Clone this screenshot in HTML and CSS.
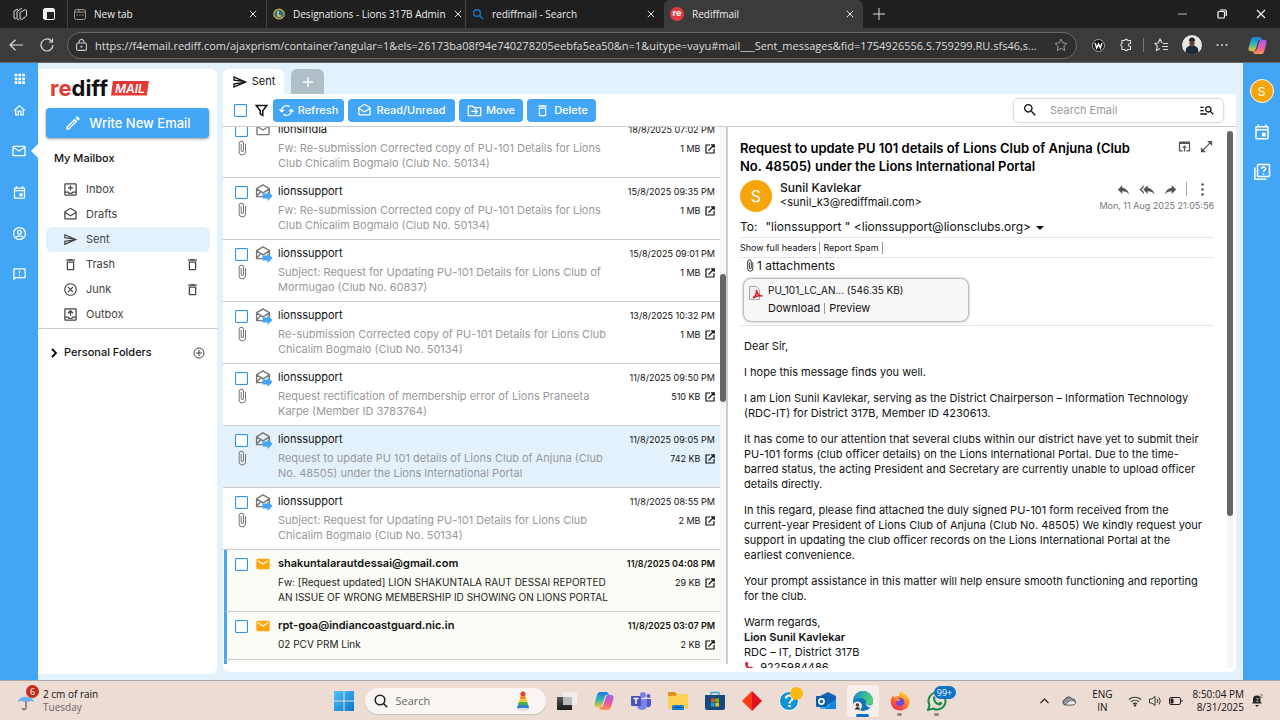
FILE: index.html
```html
<!DOCTYPE html>
<html lang="en">
<head>
    <meta charset="UTF-8">
    <meta name="viewport" content="width=device-width, initial-scale=1.0">
    <title>Rediffmail</title>
    <link rel="stylesheet" href="styles.css">
</head>
<body>

    <!-- Icon set -->
    <svg class="sprite" aria-hidden="true">
        <symbol id="close" viewBox="0 0 10 10"><path d="M1 1l8 8M9 1l-8 8" stroke="currentColor" stroke-width="1.2" fill="none"/></symbol>
        <symbol id="home" viewBox="0 0 24 24"><path d="M12 5.69l5 4.5V18h-2v-6H9v6H7v-7.81l5-4.5M12 3L2 12h3v8h6v-6h2v6h6v-8h3L12 3z"/></symbol>
        <symbol id="apps" viewBox="0 0 24 24"><path d="M3 3h5v5H3zM10 3h5v5h-5zM17 3h5v5h-5zM3 10h5v5H3zM10 10h5v5h-5zM17 10h5v5h-5zM3 17h5v5H3zM10 17h5v5h-5zM17 17h5v5h-5z"/></symbol>
        <symbol id="mail" viewBox="0 0 24 24"><path d="M22 6c0-1.1-.9-2-2-2H4c-1.1 0-2 .9-2 2v12c0 1.1.9 2 2 2h16c1.1 0 2-.9 2-2V6zm-2 0l-8 5-8-5h16zm0 12H4V8l8 5 8-5v10z"/></symbol>
        <symbol id="unread" viewBox="0 0 24 24"><path d="M20 4H4c-1.100 0-2 .9-2 2v12c0 1.100.9 2 2 2h16c1.100 0 2-.9 2-2V6c0-1.100-.9-2-2-2zm0 4l-8 5-8-5V6l8 5 8-5v2z"/></symbol>
        <symbol id="event" viewBox="0 0 24 24"><path d="M19 4h-1V2h-2v2H8V2H6v2H5c-1.110 0-1.990.9-1.990 2L3 20c0 1.100.890 2 2 2h14c1.100 0 2-.9 2-2V6c0-1.100-.9-2-2-2zm0 16H5V10h14v10zm0-12H5V6h14v2zm-7 5h5v5h-5z"/></symbol>
        <symbol id="person" viewBox="0 0 24 24"><g fill="none" stroke="currentColor" stroke-width="2"><circle cx="12" cy="12" r="9.500"/><circle cx="12" cy="10" r="3"/><path d="M5.500 18.500c3-3.500 10-3.500 13 0"/></g></symbol>
        <symbol id="feedback" viewBox="0 0 24 24"><path d="M20 2H4c-1.100 0-1.990.9-1.990 2L2 22l4-4h14c1.100 0 2-.9 2-2V4c0-1.100-.9-2-2-2zm0 14H5.170L4 17.170V4h16v12zm-9-4h2v2h-2zm0-6h2v4h-2z"/></symbol>
        <symbol id="help" viewBox="0 0 24 24"><g fill="none" stroke="currentColor" stroke-width="2"><rect x="6" y="2" width="16" height="16" rx="1"/><path d="M2.500 6v14.500a1 1 0 0 0 1 1H18M11.500 8c0-3.500 5.200-3.300 5.200-.3 0 2-2.600 2-2.600 4M14.100 13.500v2"/></g></symbol>
        <symbol id="send" viewBox="0 0 24 24"><path d="M4.010 6.030l7.510 3.220-7.520-1 .010-2.220m7.500 8.720L4 17.970v-2.220l7.510-1M2.010 3L2 10l15 2-15 2 .010 7L23 12 2.010 3z"/></symbol>
        <symbol id="drafts" viewBox="0 0 24 24"><path d="M21.990 8c0-.720-.370-1.350-.940-1.700L12 1 2.950 6.300C2.380 6.650 2 7.280 2 8v10c0 1.100.9 2 2 2h16c1.100 0 2-.9 2-2l-.010-10zM20 8v.010L12 13 4 8l8-4.680L20 8zM4 18v-7.660l8 5.020 8-5.010V18H4z"/></symbol>
        <symbol id="forwarded" viewBox="0 0 18 17"><path d="M8 .9l6.400 3.700v8H1.600v-8zM1.600 4.800L8 8.800l6.400-4M1.600 12l4.200-4.200" fill="none" stroke="#777" stroke-width="1.400"/><path d="M7.500 9.500h5V7l5 5-5 5v-2.500h-5z" fill="#42a5f5"/></symbol>
        <symbol id="trash" viewBox="0 0 24 24"><path d="M6 19c0 1.100.9 2 2 2h8c1.100 0 2-.9 2-2V7H6v12zM8 9h8v10H8V9zm7.500-5l-1-1h-5l-1 1H5v2h14V4h-3.500z"/></symbol>
        <symbol id="inbox" viewBox="0 0 24 24"><g fill="none" stroke="currentColor" stroke-width="2"><rect x="3" y="3" width="18" height="18" rx="1"/><path d="M3 16h5c1 3 7 3 8 0h5M12 5v8M8 9.500h8"/></g></symbol>
        <symbol id="outbox" viewBox="0 0 24 24"><g fill="none" stroke="currentColor" stroke-width="2"><rect x="3" y="3" width="18" height="18" rx="1"/><path d="M3 16h5c1 3 7 3 8 0h5M12 14V6M8 10l4-4 4 4"/></g></symbol>
        <symbol id="junk" viewBox="0 0 24 24"><g fill="none" stroke="currentColor" stroke-width="2"><circle cx="12" cy="12" r="10"/><path d="M7.500 7.500l9 9M16.500 7.500l-9 9"/></g></symbol>
        <symbol id="add" viewBox="0 0 24 24"><g fill="none" stroke="currentColor" stroke-width="2"><circle cx="12" cy="12" r="10"/><path d="M12 6v12M6 12h12"/></g></symbol>
        <symbol id="edit" viewBox="0 0 24 24"><path d="M14.060 9.020l.920.920L5.920 19H5v-.920l9.060-9.060M17.660 3c-.250 0-.510.1-.7.290l-1.830 1.830 3.750 3.750 1.830-1.830c.390-.390.390-1.020 0-1.410l-2.340-2.340c-.2-.2-.450-.290-.710-.290zm-3.600 3.190L3 17.250V21h3.750L17.810 9.940l-3.750-3.750z"/></symbol>
        <symbol id="filter" viewBox="0 0 24 24"><path d="M3.500 4h17L14 12.500V20l-4-2.500v-5z" fill="none" stroke="currentColor" stroke-width="2.400"/></symbol>
        <symbol id="sync" viewBox="0 0 24 24"><g fill="none" stroke="currentColor" stroke-width="2"><path d="M4 13a8 8 0 0 1 13-7M20 11a8 8 0 0 1-13 7M1 10l3 4 4-3M23 14l-3-4-4 3"/></g></symbol>
        <symbol id="move" viewBox="0 0 24 24"><path d="M2 5h7l2 2.500h11V20H2zM7 13.500h9M12.500 9.500l4 4-4 4" fill="none" stroke="currentColor" stroke-width="2"/></symbol>
        <symbol id="search" viewBox="0 0 24 24"><path d="M15.500 14h-.790l-.280-.270C15.410 12.590 16 11.110 16 9.500 16 5.910 13.090 3 9.500 3S3 5.910 3 9.500 5.910 16 9.500 16c1.610 0 3.090-.590 4.230-1.570l.270.280v.790l5 4.990L20.490 19l-4.990-5zm-6 0C7.010 14 5 11.990 5 9.500S7.010 5 9.500 5 14 7.010 14 9.500 11.990 14 9.500 14z"/></symbol>
        <symbol id="manage" viewBox="0 0 24 24"><path d="M7 9H2V7h5v2zm0 3H2v2h5v-2zm13.590 7l-3.830-3.830c-.8.520-1.740.830-2.760.830-2.760 0-5-2.240-5-5s2.240-5 5-5 5 2.240 5 5c0 1.020-.310 1.960-.830 2.750L22 17.590 20.590 19zM17 11c0-1.650-1.350-3-3-3s-3 1.350-3 3 1.350 3 3 3 3-1.350 3-3zM2 19h10v-2H2v2z"/></symbol>
        <symbol id="reply" viewBox="0 0 24 24"><path d="M10 9V5l-7 7 7 7v-4.100c5 0 8.500 1.600 11 5.100-1-5-4-10-11-11z"/></symbol>
        <symbol id="replyall" viewBox="0 0 24 24"><path d="M7 8V5l-7 7 7 7v-3l-4-4 4-4zm6 1V5l-7 7 7 7v-4.100c5 0 8.500 1.600 11 5.100-1-5-4-10-11-11z"/></symbol>
        <symbol id="forward" viewBox="0 0 24 24"><path d="M14 9V5l7 7-7 7v-4.100c-5 0-8.500 1.600-11 5.100 1-5 4-10 11-11z"/></symbol>
        <symbol id="more" viewBox="0 0 24 24"><circle cx="12" cy="4" r="2"/><circle cx="12" cy="12" r="2"/><circle cx="12" cy="20" r="2"/></symbol>
        <symbol id="browser" viewBox="0 0 24 24"><path d="M19 4H5c-1.110 0-2 .9-2 2v12c0 1.100.890 2 2 2h4v-2H5V8h14v10h-4v2h4c1.100 0 2-.9 2-2V6c0-1.100-.890-2-2-2zm-7 6l-4 4h3v6h2v-6h3l-4-4z"/></symbol>
        <symbol id="expand" viewBox="0 0 24 24"><path d="M21 11V3h-8l3.290 3.290-10 10L3 13v8h8l-3.290-3.290 10-10z"/></symbol>
        <symbol id="clip" viewBox="5 0 14 24"><path d="M16.500 6v11.500c0 2.210-1.790 4-4 4s-4-1.790-4-4V5c0-1.380 1.120-2.500 2.500-2.500s2.500 1.120 2.500 2.500v10.500c0 .550-.450 1-1 1s-1-.450-1-1V6H10v9.500c0 1.380 1.120 2.500 2.500 2.500s2.500-1.120 2.500-2.500V5c0-2.210-1.790-4-4-4S7 2.790 7 5v12.500c0 3.040 2.460 5.500 5.500 5.500s5.500-2.460 5.500-5.500V6h-1.500z"/></symbol>
        <symbol id="open" viewBox="0 0 10 10"><path d="M5 1H1v8h8V5M3.500 6.500L9 1M6 .8h3.200V4" fill="none" stroke="currentColor" stroke-width="1.200"/></symbol>
        <symbol id="copilot" viewBox="0 0 20 20">
            <linearGradient id="cpA" x1="0" y1="0" x2="0" y2="1"><stop offset="0" stop-color="#1b7be0"/><stop offset=".5" stop-color="#2fb8b0"/><stop offset="1" stop-color="#f2c230"/></linearGradient>
            <linearGradient id="cpB" x1="0" y1="0" x2="0" y2="1"><stop offset="0" stop-color="#a45bee"/><stop offset=".6" stop-color="#ee5d9b"/><stop offset="1" stop-color="#fb9a4b"/></linearGradient>
            <path d="M6 1h6c2 0 2.500 1.500 3 3h-2c-1.500 0-2 .8-2.500 2.500L8.500 13c-.5 2-1.500 3-3 3H3c-2 0-3-1.500-2.300-4L3 4c.6-2 1.500-3 3-3z" fill="url(#cpA)"/>
            <path d="M14 19H8c-2 0-2.500-1.500-3-3h2c1.500 0 2-.8 2.500-2.500L11.500 7c.5-2 1.500-3 3-3H17c2 0 3 1.500 2.300 4L17 16c-.6 2-1.500 3-3 3z" fill="url(#cpB)"/>
        </symbol>
    </svg>

    <!-- Browser tabs -->
    <header class="titlebar">
        <div class="tab-tools">
            <svg width="14" height="14" viewBox="0 0 14 14" fill="none" stroke="#ddd"><path d="M1 4l4-2M1 4v7l2 1M4 4.500L9 1M4 4.500V12l2 1M7 5.500L12.500 2.500q1 0 1 1V9L8.500 12.500q-1.500 0-1.500-1.500z"/></svg>
            <svg width="12" height="12" viewBox="0 0 12 12"><rect x=".6" y=".6" width="10.800" height="10.800" rx="2" fill="none" stroke="#fff" stroke-width="1.200"/><path d="M1 1h10v3H4v7H1z" fill="#fff" fill-opacity=".9"/><path d="M4 4v7h7V4z" fill="#1f1f1f"/></svg>
        </div>
        <div class="tab">
            <svg width="12" height="12" viewBox="0 0 12 12" fill="none" stroke="#999"><rect x=".5" y="1.500" width="11" height="10" rx="2"/><path d="M1 4h10M5 2v2M2.500 7h1.500M5.200 7h1.500M8 7h1.500"/></svg>
            <span>New tab</span>
            <button aria-label="Close tab"><svg width="8" height="8"><use href="#close"/></svg></button>
        </div>
        <div class="tab">
            <svg width="12" height="12" viewBox="0 0 12 12"><circle cx="6" cy="6" r="5.600" fill="#d3ac2b"/><circle cx="6" cy="6" r="4.300" fill="#2a6a9b"/><path d="M0 4l2 1v3L0 9zM12 4l-2 1v3l2 1z" fill="#7c8f35"/><path d="M5 3v5h3" stroke="#f3d24b" stroke-width="1.500" fill="none"/></svg>
            <span>Designations - Lions 317B Admin</span>
            <button aria-label="Close tab"><svg width="8" height="8"><use href="#close"/></svg></button>
        </div>
        <div class="tab">
            <svg width="12" height="12" viewBox="0 0 12 12" fill="none" stroke="#1a78c9" stroke-width="1.400"><circle cx="5" cy="5" r="3.300"/><path d="M7.500 7.500L11 11"/></svg>
            <span>rediffmail - Search</span>
            <button aria-label="Close tab"><svg width="8" height="8"><use href="#close"/></svg></button>
        </div>
        <div class="tab current">
            <span class="favicon">re</span>
            <span>Rediffmail</span>
            <button aria-label="Close tab"><svg width="8" height="8"><use href="#close"/></svg></button>
        </div>
        <button class="new-tab" aria-label="New tab"><svg width="12" height="12" viewBox="0 0 12 12"><path d="M6 0v12M0 6h12" stroke="#ddd"/></svg></button>
        <div class="window-buttons">
            <button aria-label="Minimise"><svg width="10" height="10" viewBox="0 0 10 10"><path d="M0 5h9" stroke="#bbb"/></svg></button>
            <button aria-label="Restore"><svg width="10" height="10" viewBox="0 0 10 10" fill="none" stroke="#fff" stroke-width="1.200"><rect x="1" y="2.500" width="6.500" height="6.500" rx="1"/><path d="M3 1h5q1.300 0 1.300 1.300V7"/></svg></button>
            <button aria-label="Close"><svg width="10" height="10"><use href="#close"/></svg></button>
        </div>
    </header>

    <!-- Address bar -->
    <div class="addressbar">
        <button aria-label="Back"><svg width="14" height="12" viewBox="0 0 14 12" fill="none" stroke="#ddd" stroke-width="1.200"><path d="M14 6H1M6.500.8L1 6l5.500 5.200"/></svg></button>
        <button aria-label="Reload"><svg width="14" height="14" viewBox="0 0 14 14" fill="none" stroke="#ddd" stroke-width="1.200"><path d="M13 7A6 6 0 1 1 11.500 3M12.500.5V4H9"/></svg></button>
        <div class="address">
            <svg width="11" height="12" viewBox="0 0 11 12" fill="none" stroke="#ccc" stroke-width="1.100"><rect x=".6" y="4" width="9.800" height="7.400" rx="1.500"/><path d="M3 4V3a2.500 2.500 0 0 1 5 0v1"/><circle cx="5.500" cy="7.700" r=".5"/></svg>
            <input type="text" aria-label="Address" value="https://f4email.rediff.com/ajaxprism/container?angular=1&amp;els=26173ba08f94e740278205eebfa5ea50&amp;n=1&amp;uitype=vayu#mail___Sent_messages&amp;fid=1754926556.S.759299.RU.sfs46,s...">
            <button aria-label="Favourite"><svg width="14" height="14" viewBox="0 0 14 14" fill="none" stroke="#999"><path d="M7 1l1.800 3.900 4.200.5-3.100 2.900.8 4.200L7 10.400l-3.700 2.100.8-4.200L1 5.400l4.200-.5z"/></svg></button>
        </div>
        <div class="browser-icons">
            <button aria-label="Extension"><svg width="13" height="13" viewBox="0 0 13 13"><circle cx="6.500" cy="6.500" r="6" fill="#111" stroke="#aaa"/><path d="M3 4l1.700 5 1.800-4 1.800 4L10 4" stroke="#fff" stroke-width="1.500" fill="none"/></svg></button>
            <button aria-label="Extensions"><svg width="14" height="14" viewBox="0 0 14 14" fill="none" stroke="#ddd" stroke-width="1.100"><path d="M3 2.500h2.500a1.700 1.700 0 0 1 3.200 0H11.500V5.500H11a1.500 1.500 0 0 0 0 3h.5v3H8.700a1.700 1.700 0 0 1-3.200 0H3V8.700a1.700 1.700 0 0 1 0-3.200z"/></svg></button>
            <span class="bar"></span>
            <button aria-label="Favourites"><svg width="14" height="14" viewBox="0 0 14 14" fill="none" stroke="#ddd" stroke-width="1.100"><path d="M8 5L6 1 4.200 5 .8 5.400 3.300 8l-.8 4.500L6 10.500M9 5.500h5M8 8.500h6M9 11.500h5"/></svg></button>
            <button aria-label="Profile"><svg width="20" height="20" viewBox="0 0 20 20"><circle cx="10" cy="10" r="10" fill="#e6e6e2"/><path d="M3.500 17.500c0-5 2-7 6.500-7s6.500 2 6.500 7A10 10 0 0 1 3.500 17.500z" fill="#1d2a37"/><path d="M7.500 6q2.500-5 5 0v4L10 12l-2.500-2z" fill="#5d4137"/><path d="M7 6q0-3.500 3-3.500T13 6z" fill="#222"/></svg></button>
            <button aria-label="Settings"><svg width="12" height="4" viewBox="0 0 12 4" fill="#ddd"><circle cx="1.500" cy="2" r="1"/><circle cx="6" cy="2" r="1"/><circle cx="10.500" cy="2" r="1"/></svg></button>
            <button aria-label="Copilot"><svg width="19" height="19"><use href="#copilot"/></svg></button>
        </div>
    </div>

    <div class="app">
        <!-- Left rail -->
        <nav class="rail">
            <a href="#" aria-label="Apps"><svg width="13" height="13"><use href="#apps"/></svg></a>
            <a href="#" aria-label="Home"><svg width="15" height="15"><use href="#home"/></svg></a>
            <a href="#" aria-label="Mail" class="active"><svg width="16" height="16"><use href="#mail"/></svg></a>
            <a href="#" aria-label="Calendar"><svg width="15" height="15"><use href="#event"/></svg></a>
            <a href="#" aria-label="Contacts"><svg width="15" height="15"><use href="#person"/></svg></a>
            <a href="#" aria-label="Feedback"><svg width="15" height="15"><use href="#feedback"/></svg></a>
        </nav>

        <!-- Folders -->
        <aside class="sidebar">
            <div class="logo"><span class="re">re</span><span>diff</span><span class="logo-mail">MAIL</span></div>
            <button class="compose"><svg width="18" height="18"><use href="#edit"/></svg>Write New Email</button>
            <h2>My Mailbox</h2>
            <ul class="folders">
                <li><a href="#"><svg width="15" height="15"><use href="#inbox"/></svg>Inbox</a></li>
                <li><a href="#"><svg width="15" height="15"><use href="#drafts"/></svg>Drafts</a></li>
                <li class="selected"><a href="#"><svg width="15" height="15"><use href="#send"/></svg>Sent</a></li>
                <li><a href="#"><svg width="15" height="15"><use href="#trash"/></svg>Trash</a><button aria-label="Empty trash"><svg width="15" height="15"><use href="#trash"/></svg></button></li>
                <li><a href="#"><svg width="15" height="15" viewBox="-1 -1 26 26"><use href="#junk" width="24" height="24"/></svg>Junk</a><button aria-label="Empty junk"><svg width="15" height="15"><use href="#trash"/></svg></button></li>
                <li><a href="#"><svg width="15" height="15"><use href="#outbox"/></svg>Outbox</a></li>
            </ul>
            <div class="personal">
                <svg width="6" height="10" viewBox="0 0 6 10"><path d="M1 1l4 4-4 4" fill="none" stroke="#000" stroke-width="1.800"/></svg>
                <h2>Personal Folders</h2>
                <button aria-label="Add folder"><svg width="12" height="12"><use href="#add"/></svg></button>
            </div>
        </aside>

        <main class="main">
            <div class="tabs">
                <button class="open-tab"><svg width="16" height="16"><use href="#send"/></svg>Sent</button>
                <button class="add-tab" aria-label="Add tab"><svg width="10" height="10" viewBox="0 0 10 10"><path d="M5 0v10M0 5h10" stroke="#fff" stroke-width="1.400"/></svg></button>
            </div>

            <div class="panel">
                <div class="toolbar">
                    <input type="checkbox" aria-label="Select all">
                    <button class="filter" aria-label="Filter"><svg width="15" height="15"><use href="#filter"/></svg></button>
                    <button class="action refresh"><svg width="15" height="15"><use href="#sync"/></svg>Refresh</button>
                    <button class="action read"><svg width="15" height="15"><use href="#drafts"/></svg>Read/Unread</button>
                    <button class="action move"><svg width="15" height="15"><use href="#move"/></svg>Move</button>
                    <button class="action delete"><svg width="15" height="15"><use href="#trash"/></svg>Delete</button>
                    <div class="search">
                        <svg width="16" height="16"><use href="#search"/></svg>
                        <input type="text" aria-label="Search Email" placeholder="Search Email">
                        <button aria-label="Advanced search"><svg width="16" height="16"><use href="#manage"/></svg></button>
                    </div>
                </div>

                <div class="panes">
                    <!-- Message list -->
                    <div class="list">
                        <ul class="messages">
                            <li>
                                <div class="marks"><input type="checkbox" aria-label="Select message"><svg width="10" height="16"><use href="#clip"/></svg></div>
                                <svg class="state" width="16" height="16"><use href="#mail"/></svg>
                                <div class="text"><h3>lionsindia</h3><p>Fw: Re-submission Corrected copy of PU-101 Details for Lions<br>Club Chicalim Bogmalo (Club No. 50134)</p></div>
                                <div class="meta"><time>18/8/2025 07:02 PM</time><span>1 MB <svg width="10" height="10"><use href="#open"/></svg></span></div>
                            </li>
                            <li>
                                <div class="marks"><input type="checkbox" aria-label="Select message"><svg width="10" height="16"><use href="#clip"/></svg></div>
                                <svg class="state" width="18" height="17"><use href="#forwarded"/></svg>
                                <div class="text"><h3>lionssupport</h3><p>Fw: Re-submission Corrected copy of PU-101 Details for Lions<br>Club Chicalim Bogmalo (Club No. 50134)</p></div>
                                <div class="meta"><time>15/8/2025 09:35 PM</time><span>1 MB <svg width="10" height="10"><use href="#open"/></svg></span></div>
                            </li>
                            <li>
                                <div class="marks"><input type="checkbox" aria-label="Select message"><svg width="10" height="16"><use href="#clip"/></svg></div>
                                <svg class="state" width="18" height="17"><use href="#forwarded"/></svg>
                                <div class="text"><h3>lionssupport</h3><p>Subject: Request for Updating PU-101 Details for Lions Club of<br>Mormugao (Club No. 60837)</p></div>
                                <div class="meta"><time>15/8/2025 09:01 PM</time><span>1 MB <svg width="10" height="10"><use href="#open"/></svg></span></div>
                            </li>
                            <li>
                                <div class="marks"><input type="checkbox" aria-label="Select message"><svg width="10" height="16"><use href="#clip"/></svg></div>
                                <svg class="state" width="18" height="17"><use href="#forwarded"/></svg>
                                <div class="text"><h3>lionssupport</h3><p>Re-submission Corrected copy of PU-101 Details for Lions Club<br>Chicalim Bogmalo (Club No. 50134)</p></div>
                                <div class="meta"><time>13/8/2025 10:32 PM</time><span>1 MB <svg width="10" height="10"><use href="#open"/></svg></span></div>
                            </li>
                            <li>
                                <div class="marks"><input type="checkbox" aria-label="Select message"><svg width="10" height="16"><use href="#clip"/></svg></div>
                                <svg class="state" width="18" height="17"><use href="#forwarded"/></svg>
                                <div class="text"><h3>lionssupport</h3><p>Request rectification of membership error of Lions Praneeta<br>Karpe (Member ID 3783764)</p></div>
                                <div class="meta"><time>11/8/2025 09:50 PM</time><span>510 KB <svg width="10" height="10"><use href="#open"/></svg></span></div>
                            </li>
                            <li class="selected">
                                <div class="marks"><input type="checkbox" aria-label="Select message"><svg width="10" height="16"><use href="#clip"/></svg></div>
                                <svg class="state" width="18" height="17"><use href="#forwarded"/></svg>
                                <div class="text"><h3>lionssupport</h3><p>Request to update PU 101 details of Lions Club of Anjuna (Club<br>No. 48505) under the Lions International Portal</p></div>
                                <div class="meta"><time>11/8/2025 09:05 PM</time><span>742 KB <svg width="10" height="10"><use href="#open"/></svg></span></div>
                            </li>
                            <li>
                                <div class="marks"><input type="checkbox" aria-label="Select message"><svg width="10" height="16"><use href="#clip"/></svg></div>
                                <svg class="state" width="18" height="17"><use href="#forwarded"/></svg>
                                <div class="text"><h3>lionssupport</h3><p>Subject: Request for Updating PU-101 Details for Lions Club<br>Chicalim Bogmalo (Club No. 50134)</p></div>
                                <div class="meta"><time>11/8/2025 08:55 PM</time><span>2 MB <svg width="10" height="10"><use href="#open"/></svg></span></div>
                            </li>
                            <li class="new">
                                <div class="marks"><input type="checkbox" aria-label="Select message"></div>
                                <svg class="state" width="16" height="16"><use href="#unread"/></svg>
                                <div class="text"><h3>shakuntalarautdessai@gmail.com</h3><p>Fw: [Request updated] LION SHAKUNTALA RAUT DESSAI REPORTED<br>AN ISSUE OF WRONG MEMBERSHIP ID SHOWING ON LIONS PORTAL</p></div>
                                <div class="meta"><time>11/8/2025 04:08 PM</time><span>29 KB <svg width="10" height="10"><use href="#open"/></svg></span></div>
                            </li>
                            <li class="new">
                                <div class="marks"><input type="checkbox" aria-label="Select message"></div>
                                <svg class="state" width="16" height="16"><use href="#unread"/></svg>
                                <div class="text"><h3>rpt-goa@indiancoastguard.nic.in</h3><p>02 PCV PRM Link</p></div>
                                <div class="meta"><time>11/8/2025 03:07 PM</time><span>2 KB <svg width="10" height="10"><use href="#open"/></svg></span></div>
                            </li>
                            <li class="new"></li>
                        </ul>
                        <div class="scrollbar"><span class="list-thumb"></span></div>
                    </div>

                    <!-- Open message -->
                    <article class="reader">
                        <div class="mail">
                            <div class="subject">
                                <h1>Request to update PU 101 details of Lions Club of Anjuna (Club<br>No. 48505) under the Lions International Portal</h1>
                                <button aria-label="Open in window"><svg width="15" height="15"><use href="#browser"/></svg></button>
                                <button aria-label="Expand"><svg width="15" height="15"><use href="#expand"/></svg></button>
                            </div>
                            <div class="from">
                                <span class="avatar">S</span>
                                <p class="who"><b>Sunil Kavlekar</b><span>&lt;sunil_k3@rediffmail.com&gt;</span></p>
                                <div class="when">
                                    <div class="replies">
                                        <button aria-label="Reply"><svg width="15" height="15"><use href="#reply"/></svg></button>
                                        <button aria-label="Reply all"><svg width="16" height="15"><use href="#replyall"/></svg></button>
                                        <button aria-label="Forward"><svg width="15" height="15"><use href="#forward"/></svg></button>
                                        <span class="bar"></span>
                                        <button aria-label="More"><svg width="15" height="15"><use href="#more"/></svg></button>
                                    </div>
                                    <time>Mon, 11 Aug 2025 21:05:56</time>
                                </div>
                            </div>
                            <p class="to"><span>To:</span>"lionssupport " &lt;lionssupport@lionsclubs.org&gt; <svg width="8" height="4" viewBox="0 0 8 4"><path d="M0 0h8L4 4z"/></svg></p>
                            <div class="headers"><a href="#">Show full headers</a><a href="#">Report Spam</a></div>
                            <div class="attachments">
                                <p><svg width="8" height="13"><use href="#clip"/></svg>1 attachments</p>
                                <div class="file">
                                    <svg width="14" height="14" viewBox="0 0 14 14"><path d="M.5.500h7l3 3v10H.5z" fill="#eee" stroke="#aaa"/><path d="M4 12c2-1 4-5 3.500-8 .5 4 3 6 6 6-4-1-6.500 0-9.500 2z" fill="none" stroke="#d7222b" stroke-width="1.600"/></svg>
                                    <div>
                                        <p>PU_101_LC_AN... (546.35 KB)</p>
                                        <p class="links"><a href="#">Download</a><i></i><a href="#">Preview</a></p>
                                    </div>
                                </div>
                            </div>
                            <div class="letter">
                                <p>Dear Sir,</p>
                                <p>I hope this message finds you well.</p>
                                <p>I am Lion Sunil Kavlekar, serving as the District Chairperson – Information Technology<br>(RDC-IT) for District 317B, Member ID 4230613.</p>
                                <p>It has come to our attention that several clubs within our district have yet to submit their<br>PU-101 forms (club officer details) on the Lions International Portal. Due to the time-<br>barred status, the acting President and Secretary are currently unable to upload officer<br>details directly.</p>
                                <p>In this regard, please find attached the duly signed PU-101 form received from the<br>current-year President of Lions Club of Anjuna (Club No. 48505) We kindly request your<br>support in updating the club officer records on the Lions International Portal at the<br>earliest convenience.</p>
                                <p>Your prompt assistance in this matter will help ensure smooth functioning and reporting<br>for the club.</p>
                                <p>Warm regards,<br><b>Lion Sunil Kavlekar</b><br>RDC – IT, District 317B<br><svg width="10" height="10" viewBox="0 0 10 10"><path d="M1 2l2-1.500L4.500 3 3.500 4.500l2 2L7 5.500 9.500 7 8 9.500C4 9.500 1 6 1 2z" fill="#d8243c"/></svg> &nbsp;9225984486</p>
                            </div>
                        </div>
                        <div class="scrollbar"><span class="mail-thumb"></span></div>
                    </article>
                </div>
            </div>
        </main>

        <!-- Right rail -->
        <nav class="rail right">
            <a href="#" class="user">S</a>
            <a href="#" aria-label="Calendar"><svg width="18" height="18"><use href="#event"/></svg></a>
            <a href="#" aria-label="Help"><svg width="18" height="18"><use href="#help"/></svg></a>
        </nav>
    </div>

    <!-- Taskbar -->
    <footer class="taskbar">
        <div class="weather">
            <span class="umbrella">
                <svg width="18" height="20" viewBox="0 0 18 20"><path d="M1 11C2 4 16 4 17 11l-3-1-2.500 1L9 10l-2.500 1L4 10z" fill="#6fb1f3"/><path d="M9 10v7c0 2-3.500 2-3.500 0" fill="none" stroke="#666" stroke-width="1.300"/></svg>
                <span class="count">6</span>
            </span>
            <p>2 cm of rain<small>Tuesday</small></p>
        </div>
        <div class="dock">
            <button aria-label="Start"><svg width="20" height="20" viewBox="0 0 20 20"><linearGradient id="win" x1="0" y1="0" x2="1" y2="1"><stop offset="0" stop-color="#4cc6f7"/><stop offset="1" stop-color="#0a73cf"/></linearGradient><path d="M0 0h9.500v9.500H0zM10.500 0H20v9.500h-9.500zM0 10.500h9.500V20H0zM10.500 10.500H20V20h-9.500z" fill="url(#win)"/></svg></button>
            <label class="desk-search">
                <svg width="14" height="14" viewBox="0 0 14 14" fill="none" stroke="#222" stroke-width="1.600"><circle cx="6" cy="6" r="4.800"/><path d="M9.500 9.500l3.700 3.700"/></svg>
                <input type="text" placeholder="Search" aria-label="Search">
                <svg width="14" height="20" viewBox="0 0 14 20"><circle cx="7" cy="3" r="2.600" fill="#e0482f"/><rect x="4" y="5" width="6" height="4" rx="2" fill="#f58a1f"/><rect x="3" y="8" width="8" height="4" rx="2" fill="#f4cc2e"/><rect x="2" y="11" width="10" height="4" rx="2" fill="#49ad50"/><rect x="1" y="14" width="12" height="4" rx="2" fill="#2a80d2"/><ellipse cx="7" cy="18.300" rx="6.500" ry="1.500" fill="#ddd"/></svg>
            </label>
            <button aria-label="Task view"><svg width="20" height="20" viewBox="0 0 20 20"><linearGradient id="tv" x2="0" y2="1"><stop offset="0" stop-color="#555"/><stop offset="1" stop-color="#1b1b1b"/></linearGradient><path d="M0 6h15v13H0z" fill="url(#tv)"/><path d="M6 1h14v13H6z" fill="#eee" fill-opacity=".9"/><path d="M6 6h9v8H6z" fill="#bbb"/></svg></button>
            <button aria-label="Copilot"><svg width="20" height="20"><use href="#copilot"/></svg></button>
            <button aria-label="Teams"><svg width="20" height="20" viewBox="0 0 20 20"><circle cx="12" cy="4" r="3" fill="#7b83eb"/><circle cx="17.500" cy="5" r="2" fill="#5059c9"/><path d="M14 8h6v6q-1 3-4 2z" fill="#5059c9"/><path d="M6 8h10v7q-1 4-5 4t-5-4z" fill="#7b83eb"/><rect y="5" width="10" height="10" rx="1" fill="#4b53bc"/><path d="M2.500 7.500h5M5 7.500V13" stroke="#fff" stroke-width="1.400"/></svg></button>
            <button aria-label="Files"><svg width="20" height="20" viewBox="0 0 20 20"><path d="M0 2q0-1 1-1h6l2 2.500V8H0z" fill="#d9941c"/><path d="M0 5l8-.2L9.500 3H19q1 0 1 1v14H1q-1 0-1-1z" fill="#fbd253"/><path d="M4 19v-3.500Q4 14 5.500 14h9q1.500 0 1.500 1.500V19z" fill="#1c7bd3"/><path d="M7 16.500h6" stroke="#0b4f94"/></svg></button>
            <button aria-label="Store"><svg width="20" height="20" viewBox="0 0 20 20"><path d="M6 4V1.500h8V4" fill="none" stroke="#39a7d8" stroke-width="1.400"/><path d="M0 4h20v13q0 2-2 2H2q-2 0-2-2z" fill="#164a7c"/><path d="M6 7.500h3.700v3.700H6z" fill="#f25022"/><path d="M10.300 7.500H14v3.700h-3.700z" fill="#7fba00"/><path d="M6 11.800h3.700v3.700H6z" fill="#00a4ef"/><path d="M10.300 11.800H14v3.700h-3.700z" fill="#ffb900"/></svg></button>
            <button aria-label="Diamond"><svg width="20" height="20" viewBox="0 0 20 20"><path d="M10 0v20L0 10z" fill="#ff3b14"/><path d="M10 0l10 10-10 10z" fill="#e0121a"/></svg></button>
            <button aria-label="Get help" class="badged"><svg width="20" height="20" viewBox="0 0 20 20"><circle cx="10" cy="10" r="9.500" fill="#0f93d2" stroke="#fff"/><path d="M7 7.500c0-4 6.500-4 6.500 0 0 2.500-3 2.500-3 5M10.500 14v2" fill="none" stroke="#fff" stroke-width="2.200"/></svg><span class="dot"></span></button>
            <button aria-label="Outlook"><svg width="20" height="20" viewBox="0 0 20 20"><path d="M4 5l8-4 8 4v12q0 1-1 1H5q-1 0-1-1z" fill="#1463b8"/><path d="M4 9l8 5 8-5v8q0 1-1 1H5q-1 0-1-1z" fill="#35b4ef"/><path d="M20 9L9 18h10q1 0 1-1z" fill="#1684dd"/><rect y="5" width="11" height="11" rx="1" fill="#0c5dae"/><circle cx="5.500" cy="10.500" r="2.600" fill="none" stroke="#fff" stroke-width="1.600"/></svg></button>
            <button aria-label="Edge" class="running"><svg width="20" height="20" viewBox="0 0 20 20"><linearGradient id="ed" x2="1" y2=".3"><stop offset="0" stop-color="#1688d4"/><stop offset="1" stop-color="#50d078"/></linearGradient><circle cx="10" cy="10" r="10" fill="#1272bb"/><path d="M0 10A10 10 0 0 1 20 10c0 3-2.500 4-5 4s-3-1-2-2.500C14 8 6 5 0 10z" fill="url(#ed)"/><path d="M12.500 12c1 3 5 3 7 1l-1.500 3.500q-4 .5-5.500-4.500z" fill="#e9f3f7"/><circle cx="4.500" cy="15" r="4.500" fill="#eee"/><path d="M1.500 18.500q3-5 6 0z" fill="#222"/><circle cx="4.500" cy="14" r="1.800" fill="#5b3e33"/></svg></button>
            <button aria-label="Firefox" class="idle"><svg width="20" height="20" viewBox="0 0 20 20"><linearGradient id="ff" x1=".8" y1="0" x2=".2" y2="1"><stop offset="0" stop-color="#ffe03a"/><stop offset=".5" stop-color="#ff7a25"/><stop offset="1" stop-color="#ee2460"/></linearGradient><path d="M12 0c0 2 5 3 7 8 2 6-3 11.500-9 11.500S0 15 1 8l2-4 1 2.500C6 5 8 5 9 5c0-2 1-4 3-5z" fill="url(#ff)"/><circle cx="10" cy="11" r="4.300" fill="#7542d9"/><path d="M5 8c2-2 4 1 6 0-1 2-3 1-3 3z" fill="#ff9a28"/></svg></button>
            <button aria-label="WhatsApp" class="idle badged"><svg width="20" height="20" viewBox="0 0 20 20"><path d="M1 19l1.500-5A8.500 8.500 0 1 1 6 17.500z" fill="none" stroke="#178a4b" stroke-width="2"/><path d="M6 6q1.500-2 2.500 1L8 8.500q1 2.500 3.500 3.500l1.500-1.500 2.500 1.500c-1 5-10 2-9.500-6z" fill="#178a4b"/></svg><span class="badge">99+</span></button>
        </div>
        <div class="tray">
            <svg width="9" height="6" viewBox="0 0 9 6"><path d="M.5 5l4-4 4 4" fill="none" stroke="#222" stroke-width="1.200"/></svg>
            <svg class="cloud" width="14" height="10" viewBox="0 0 14 10"><path d="M3.500 9A2.800 2.800 0 0 1 3 3.500 3.800 3.800 0 0 1 10 3a3 3 0 0 1 .8 6z" fill="#8e9499" stroke="#444"/><path d="M4 8.500L8 5.500q5-1 5 2l-2 1z" fill="#eee"/></svg>
            <p class="lang">ENG<br>IN</p>
            <svg width="14" height="12" viewBox="0 0 14 12" fill="none" stroke="#333" stroke-width="1.100"><path d="M1 4.500a9 9 0 0 1 12 0M3 6.800a6 6 0 0 1 8 0M5 9a3 3 0 0 1 4 0"/><circle cx="7" cy="10.500" r=".6"/></svg>
            <svg width="13" height="12" viewBox="0 0 13 12" fill="none" stroke="#333"><path d="M.5 4h2.300L6 1.500v9L2.800 8H.5zM8 4q1.500 2 0 4M10 2.500q2.500 3.500 0 7"/></svg>
            <svg width="14" height="8" viewBox="0 0 14 8" fill="none" stroke="#222"><rect x=".5" y=".5" width="11" height="7" rx="1.500"/><path d="M13 3v2"/><path d="M2 2h2v4H2z" fill="#222"/></svg>
            <p class="clock">8:50:04 PM<br>8/31/2025</p>
            <svg width="12" height="13" viewBox="0 0 12 13"><path d="M1 9.500l1-1.500V5Q2 1.500 6 1.500T9.500 5v3l1.500 1.500zM4 11h4l-2 2z" fill="#222"/><path d="M5 4.500h3l-3 3h3M9 .8h2.500L9 3.500h2.500" fill="none" stroke="#888"/></svg>
        </div>
    </footer>

</body>
</html>
```
FILE: styles.css
```css
* {
    box-sizing: border-box;
}
body {
    display: flex;
    flex-direction: column;
    height: 100vh;
    margin: 0;
    overflow: hidden;
    font-family: Inter, sans-serif;
    font-size: 11px;
    line-height: 15px;
    color: #111;
}
h1, h2, h3, p, ul {
    margin: 0;
    padding: 0;
    font-size: inherit;
}
ul {
    list-style: none;
}
a {
    color: inherit;
    text-decoration: none;
}
button {
    display: flex;
    align-items: center;
    justify-content: center;
    padding: 0;
    border: 0;
    background: none;
    color: inherit;
    font: inherit;
}
svg {
    flex: none;
}
svg:not([fill]) {
    fill: currentColor;
}
.sprite {
    position: absolute;
    width: 0;
    height: 0;
}
input[type="text"] {
    flex: 1;
    min-width: 0;
    padding: 0;
    border: 0;
    outline: 0;
    background: none;
    color: inherit;
    font: inherit;
}
input[type="checkbox"] {
    appearance: none;
    width: 13px;
    height: 13px;
    margin: 0;
    border: 1px solid #2f93ea;
    border-radius: 1px;
    background: #fff;
    box-shadow: inset 0 0 1px #42a5f5;
}

/* Browser */
.titlebar, .addressbar, .taskbar {
    font-family: "Open Sans", sans-serif;
}
.titlebar {
    display: flex;
    height: 28px;
    background: #1f1f1f;
    color: #eee;
    font-size: 10px;
    white-space: nowrap;
}
.tab-tools {
    display: flex;
    align-items: center;
    gap: 16px;
    width: 67px;
    padding-left: 13px;
}
.tab {
    display: flex;
    align-items: center;
    gap: 8px;
    width: 199px;
    padding: 0 9px 0 6px;
    border-left: 1px solid #444;
}
.tab button {
    margin-left: auto;
}
.tab.current {
    border: 0;
    border-radius: 6px 6px 0 0;
    background: #3b3b3b;
}
.favicon {
    width: 14px;
    height: 14px;
    border-radius: 50%;
    background: #e23b3e;
    color: #fff;
    font: bold 9px/12px Inter, sans-serif;
    text-align: center;
}
.new-tab {
    width: 32px;
}
.window-buttons {
    display: flex;
    margin-left: auto;
}
.window-buttons button {
    width: 39px;
}
.addressbar {
    display: flex;
    align-items: center;
    height: 35px;
    padding-left: 9px;
    border-bottom: 1px solid #666;
    background: #3b3b3b;
    color: #ddd;
}
.addressbar > button {
    width: 14px;
    margin-right: 17px;
}
.addressbar > button + button {
    margin-right: 13px;
}
.address {
    display: flex;
    flex: 1;
    align-items: center;
    gap: 8px;
    height: 27px;
    padding: 0 8px;
    border: 1px solid #6a6a6a;
    border-radius: 14px;
    background: #2f2f2f;
    font-size: 11px;
}
.browser-icons {
    display: flex;
    align-items: center;
    gap: 14px;
    padding: 0 13px 0 15px;
}
.browser-icons .bar {
    margin: 0 -4px;
}
.browser-icons button:last-child {
    margin-left: 6px;
}
.bar {
    width: 1px;
    height: 14px;
    background: #777;
}

/* Mail app */
.app {
    display: flex;
    flex: 1;
    min-height: 0;
    background: #e3f1fd;
}
.rail {
    display: flex;
    flex-direction: column;
    align-items: center;
    gap: 25px;
    width: 38px;
    padding-top: 7px;
    background: #42a5f5;
    color: #fff;
}
.rail a {
    display: flex;
    align-items: center;
    justify-content: center;
    width: 100%;
    height: 16px;
}
.rail a:first-child {
    margin-bottom: -9px;
}
.rail .active {
    position: relative;
}
.rail .active::after {
    content: "";
    position: absolute;
    right: 0;
    border: 7px solid transparent;
    border-left-width: 0;
    border-right-color: #fff;
}
.rail.right {
    gap: 22px;
    width: 37px;
    padding-top: 16px;
}
.rail.right a {
    height: 18px;
}
.rail .user:first-child {
    width: 24px;
    height: 24px;
    margin-bottom: -2px;
    border: 1px solid #fff;
    border-radius: 50%;
    background: #f6a50c;
    font-size: 12px;
}

.sidebar {
    width: 179px;
    margin: 6px 6px 6px 0;
    border-radius: 0 6px 6px 0;
    background: #fff;
}
.logo {
    display: flex;
    align-items: center;
    height: 30px;
    margin: 4px 0 5px 12px;
    color: #111;
    font-size: 22px;
    font-weight: bold;
}
.logo .re {
    color: #e53935;
}
.logo-mail {
    margin-left: 3px;
    padding: 0 4px;
    background: #e53935;
    clip-path: polygon(2px 0, 100% 0, calc(100% - 2px) 100%, 0 100%);
    color: #fff;
    font-size: 12px;
    font-style: italic;
    font-weight: 600;
}
.compose {
    gap: 7px;
    width: 163px;
    height: 30px;
    margin-left: 8px;
    border-radius: 4px;
    background: #42a5f5;
    box-shadow: 0 1px 3px #999;
    color: #fff;
    font-size: 13px;
    font-weight: 500;
}
.sidebar h2 {
    font-weight: 500;
}
.sidebar > h2 {
    margin: 13px 16px 11px;
}
.folders {
    padding: 0 7px 1px 8px;
    border-bottom: 1px solid #ccc;
    color: #444;
}
.folders li {
    display: flex;
    align-items: center;
    height: 25px;
    padding: 0 10px 0 17px;
    border-radius: 6px;
}
.folders .selected {
    background: #e3f1fd;
}
.folders a {
    display: flex;
    flex: 1;
    align-items: center;
    gap: 8px;
}
.personal {
    display: flex;
    align-items: center;
    gap: 7px;
    padding: 16px 12px 0 13px;
}
.personal button {
    margin-left: auto;
    color: #444;
}

.main {
    display: flex;
    flex: 1;
    flex-direction: column;
    min-width: 0;
    margin: 6px 7px 8px 0;
}
.tabs {
    display: flex;
    gap: 7px;
    height: 25px;
}
.open-tab {
    gap: 4px;
    width: 61px;
    border-radius: 6px 6px 0 0;
    background: #fff;
}
.add-tab {
    width: 33px;
    border-radius: 6px 6px 0 0;
    background: #b0bec5;
}
.panel {
    display: flex;
    flex: 1;
    flex-direction: column;
    min-height: 0;
    border-radius: 0 0 6px 6px;
    background: #fff;
}
.toolbar {
    display: flex;
    align-items: center;
    gap: 4px;
    height: 33px;
    padding: 0 12px 0 11px;
    border-bottom: 1px solid #ccc;
}
.filter {
    width: 15px;
    margin-left: 3px;
}
.action {
    gap: 4px;
    height: 23px;
    border-radius: 4px;
    background: #42a5f5;
    color: #fff;
    font-weight: 500;
}
.refresh {
    width: 71px;
}
.read {
    width: 107px;
}
.move {
    width: 64px;
}
.delete {
    width: 69px;
}
.search {
    display: flex;
    align-items: center;
    gap: 12px;
    width: 211px;
    height: 25px;
    margin-left: auto;
    padding: 0 8px;
    border: 1px solid #ddd;
    border-radius: 6px;
    box-shadow: 0 0 2px #ddd;
}
.search input::placeholder {
    color: #999;
    opacity: 1;
}

.panes {
    display: flex;
    flex: 1;
    min-height: 0;
}
.list {
    display: flex;
    width: 505px;
    margin-bottom: 8px;
    overflow: hidden;
    border-right: 2px solid #ccc;
}
/* list is scrolled part way into its first message */
.messages {
    flex: 1;
    min-width: 0;
    margin-top: -11px;
}
.messages li {
    display: flex;
    height: 62px;
    padding: 6px 5px 0 12px;
    border-bottom: 1px solid #ccc;
}
.messages .selected {
    background: #e3f1fd;
}
.messages .new {
    padding-left: 8px;
    border-left: 3px solid #4ca6ee;
    margin-left: 1px;
    background: #fbfcf5;
}
.messages .new:nth-last-child(2) {
    height: 48px;
}
.marks {
    display: flex;
    flex-direction: column;
    align-items: center;
    gap: 3px;
    width: 13px;
    padding-top: 2px;
    color: #777;
}
.state {
    margin: 0 5px 0 7px;
    color: #777;
}
.state[width="16"] {
    margin: 0 7px 0 7px;
}
.new .state {
    color: #fba60c;
}
.text {
    flex: 1;
    min-width: 0;
    white-space: nowrap;
}
.text h3 {
    margin-bottom: 4px;
    font-weight: 400;
}
.text p {
    color: #999;
}
.meta {
    display: flex;
    flex-direction: column;
    gap: 4px;
    font-size: 9px;
    text-align: right;
    white-space: nowrap;
}
.meta svg {
    margin-left: 2px;
    vertical-align: -2px;
}
.new h3, .new time {
    font-weight: 600;
}
.new .text p {
    color: #222;
    font-size: 10px;
}
.scrollbar {
    width: 6px;
    background: #f6f6f6;
}
.scrollbar span {
    display: block;
    width: 6px;
    border-radius: 3px;
    background: #666;
}
.list-thumb {
    height: 128px;
    margin-top: 147px;
}
.mail-thumb {
    height: 385px;
}

.reader {
    display: flex;
    flex: 1;
    min-width: 0;
    margin: 4px 3px 4px 0;
    overflow: hidden;
}
.mail {
    flex: 1;
    min-width: 0;
    padding: 8px 13px 0 12px;
    white-space: nowrap;
}
.subject {
    display: flex;
    align-items: flex-start;
    gap: 7px;
    color: #555;
}
.subject h1 {
    flex: 1;
    min-width: 0;
    color: #000;
    font-size: 13px;
    font-weight: 600;
    line-height: 18px;
}
.from {
    display: flex;
    gap: 8px;
    margin-top: 5px;
}
.avatar {
    width: 32px;
    height: 32px;
    border-radius: 50%;
    background: #f6a50c;
    color: #fff;
    font-size: 16px;
    line-height: 32px;
    text-align: center;
}
.who b {
    display: block;
    font-size: 12px;
    font-weight: 500;
}
.when {
    margin-left: auto;
    color: #777;
    font-size: 9px;
}
.replies {
    display: flex;
    align-items: center;
    justify-content: flex-end;
    gap: 8px;
    height: 18px;
    color: #555;
}
.replies .bar {
    background: #aaa;
}
.replies button:last-child {
    margin-right: 4px;
}
.to {
    margin-top: 6px;
    padding-bottom: 3px;
    border-bottom: 1px solid #e5e5e5;
    font-size: 12px;
}
.to span {
    margin-right: 8px;
}
.to svg {
    margin-left: 2px;
    vertical-align: 1px;
}
.headers {
    display: flex;
    height: 20px;
    padding-top: 4px;
    border-bottom: 1px solid #e5e5e5;
    font-size: 9px;
    line-height: 12px;
}
.headers a {
    height: 12px;
    margin-right: 3px;
    padding-right: 3px;
    border-right: 1px solid #999;
}
.attachments {
    height: 68px;
    border-bottom: 1px solid #e5e5e5;
}
.attachments > p {
    display: flex;
    align-items: center;
    gap: 3px;
    padding-left: 6px;
    font-size: 12px;
}
.file {
    display: flex;
    gap: 5px;
    width: 226px;
    height: 44px;
    margin: 5px 0 0 3px;
    padding: 4px 5px;
    border: 1px solid #bbb;
    border-radius: 8px;
    background: #f7f7f7;
    box-shadow: 0 0 3px #bbb;
    font-size: 10px;
}
.file svg {
    margin-top: 3px;
}
.links {
    display: flex;
    align-items: center;
    gap: 4px;
    padding-top: 3px;
    font-size: 11px;
}
.links i {
    width: 1px;
    height: 11px;
    background: #999;
}
.letter {
    padding: 13px 4px 0;
}
.letter p {
    margin-bottom: 11px;
}
.letter b {
    font-weight: 600;
}

/* Taskbar */
.taskbar {
    display: grid;
    grid-template-columns: 1fr auto 1fr;
    height: 40px;
    border-top: 1px solid #aaa;
    background: #ecdcd4;
    font-size: 10px;
    line-height: 13px;
}
.weather {
    display: flex;
    align-items: center;
    gap: 8px;
    padding-left: 17px;
}
.weather small {
    display: block;
    color: #666;
    font-size: 10px;
}
.umbrella, .badged {
    position: relative;
}
.umbrella svg {
    display: block;
}
.count, .badge, .dot {
    position: absolute;
    border-radius: 7px;
    background: #c42b1c;
    color: #fff;
    font-size: 9px;
    line-height: 13px;
    text-align: center;
}
.count {
    top: -6px;
    right: -4px;
    width: 13px;
}
.badge {
    top: 5px;
    right: -3px;
    width: 22px;
    background: #0b72c9;
}
.dot {
    top: 6px;
    right: 2px;
    width: 13px;
    height: 13px;
    background: #fdb813;
}
.dock {
    display: flex;
    align-items: center;
    gap: 5px;
}
.dock button {
    width: 32px;
    height: 39px;
}
.running, .idle {
    position: relative;
}
.dock .running {
    height: 32px;
    border-radius: 4px;
    background: #f6efeb;
}
.running::after, .idle::after {
    content: "";
    position: absolute;
    bottom: 0;
    width: 13px;
    height: 3px;
    border-radius: 2px;
    background: #0b6fc6;
}
.idle::after {
    bottom: 4px;
    width: 5px;
    background: #888;
}
.desk-search {
    display: flex;
    align-items: center;
    gap: 8px;
    width: 181px;
    height: 26px;
    padding: 0 16px 0 9px;
    border-radius: 13px;
    background: #faf5f2;
    box-shadow: 0 1px 1px #cbbfb9;
    font-size: 11px;
}
.desk-search input::placeholder {
    color: #666;
    opacity: 1;
}
.tray {
    display: flex;
    align-items: center;
    justify-content: flex-end;
    gap: 7px;
    padding-right: 17px;
}
.cloud {
    margin: 0 9px 0 6px;
}
.lang {
    margin-right: 8px;
    text-align: center;
}
.clock {
    margin-left: 3px;
    text-align: right;
}
```
